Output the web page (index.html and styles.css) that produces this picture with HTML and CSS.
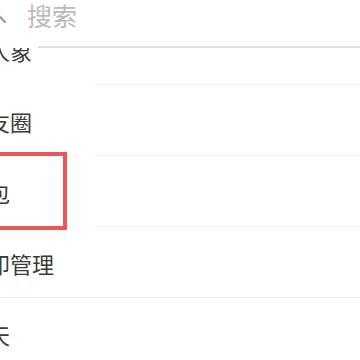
FILE: index.html
```html
<!DOCTYPE html>
<html lang="zh">
<head>
<meta charset="utf-8">
<link rel="stylesheet" href="styles.css">
</head>
<body>
<div class="screen">
  <div class="shift">
    <div class="search-bar">
      <svg class="search-icon" width="26" height="26" viewBox="0 0 26 26" fill="none" stroke="#9a9a9a" stroke-width="2.2">
        <circle cx="9" cy="9" r="7"/>
        <path d="M14.5 14.5 L22 22" stroke-linecap="round"/>
      </svg>
      <span class="search-text">搜索</span>
    </div>
    <div class="underline"></div>
    <div class="viewport">
      <ul class="list">
        <li class="row">个人象</li>
        <li class="row">朋友圈</li>
        <li class="row">钱包</li>
        <li class="row">打印管理</li>
        <li class="row">聊天</li>
      </ul>
    </div>
  </div>
  <div class="highlight"></div>
</div>
</body>
</html>
```

FILE: styles.css
```css
html, body {
  margin: 0;
  padding: 0;
  background: #ffffff;
}

.screen {
  position: relative;
  width: 360px;
  height: 360px;
  overflow: hidden;
  background: #ffffff;
  font-family: "Noto Sans CJK SC", "Noto Sans", sans-serif;
}

.shift {
  width: 408px;
  margin-left: -48px;
}

.search-bar {
  height: 46px;
  display: flex;
  align-items: flex-start;
  padding-left: 31px;
  box-sizing: border-box;
}

.search-icon {
  flex: none;
  margin-right: 18px;
}

.search-text {
  font-size: 25px;
  color: #bababa;
  line-height: 1;
  margin-top: 3px;
}

.underline {
  height: 2px;
  margin-left: 86px;
  background: #dedede;
}

.viewport {
  height: 312px;
  overflow: hidden;
}

.list {
  list-style: none;
  margin: -34px 0 0 0;
  padding: 0;
}

.row {
  position: relative;
  height: 71px;
  display: flex;
  align-items: center;
  padding-left: 14px;
  font-size: 22px;
  color: #3a3a3a;
  box-sizing: border-box;
}

.row::after {
  content: "";
  position: absolute;
  left: 143px;
  right: 0;
  bottom: 0;
  height: 1px;
  background: #f1f1f1;
}

.row:nth-child(4)::after {
  left: 0;
}

.highlight {
  position: absolute;
  left: -10px;
  top: 152px;
  width: 77px;
  height: 78px;
  border: 4px solid #ea5557;
  box-sizing: border-box;
}
```
